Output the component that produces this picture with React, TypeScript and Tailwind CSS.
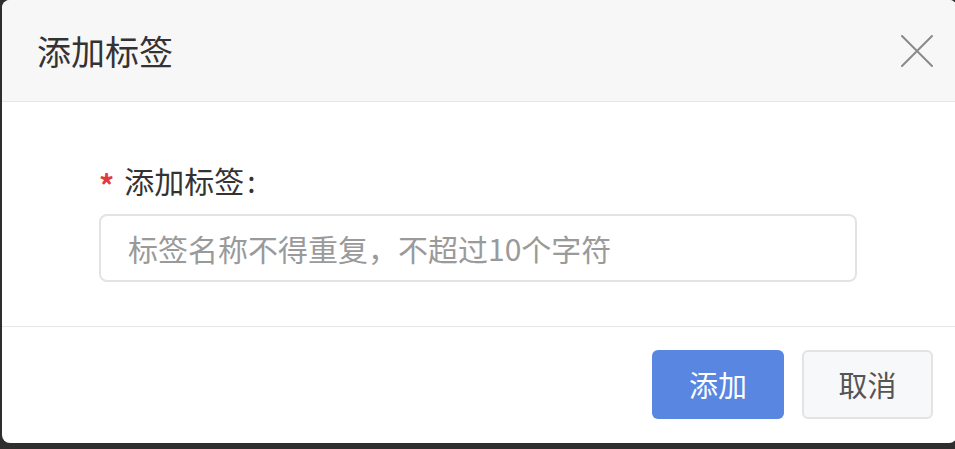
const font = {
  fontFamily: '"Noto Sans CJK SC", "Noto Sans", sans-serif',
};

export default function App() {
  return (
    <div className="h-[449px] w-[955px] overflow-hidden bg-[#2e2e2e]" style={font}>
      <div className="ml-[2px] flex h-[443px] w-[955px] flex-col overflow-hidden rounded-lg bg-white">
        {/* Header */}
        <div className="flex h-[102px] shrink-0 items-center justify-between border-b border-[#e6e6e6] bg-[#f7f7f7] pl-[35px] pr-[24px]">
          <h2 className="text-[34px] leading-none text-[#333]">添加标签</h2>
          <button className="flex h-[32px] w-[32px] items-center justify-center">
            <svg viewBox="0 0 32 32" className="h-[32px] w-[32px]" fill="none" stroke="#8a8a8a" strokeWidth={2} strokeLinecap="round">
              <path d="M1 1L31 31M31 1L1 31" />
            </svg>
          </button>
        </div>

        {/* Body */}
        <div className="border-b border-[#e6e6e6] px-[97px] pb-[44px] pt-[60px]">
          <label className="flex h-[36px] items-center text-[30px] text-[#333]">
            <span className="mr-[10px] mt-[8px] text-[30px] font-bold leading-none text-[#e5383b]">*</span>
            添加标签<span className="ml-[3px]">:</span>
          </label>
          <input
            className="mt-[16px] h-[68px] w-[758px] rounded-lg border-2 border-[#e3e3e3] px-[27px] text-[30px] text-[#333] outline-none placeholder:text-[#9a9a9a]"
            placeholder="标签名称不得重复，不超过10个字符"
          />
        </div>

        {/* Footer */}
        <div className="flex justify-end gap-[18px] pr-[24px] pt-[23px]">
          <button className="h-[69px] w-[132px] rounded-md bg-[#5886e0] text-[29px] text-white">
            添加
          </button>
          <button className="h-[69px] w-[131px] rounded-md border-2 border-[#e3e3e3] bg-[#f7f8fa] text-[29px] text-[#555]">
            取消
          </button>
        </div>
      </div>
    </div>
  );
}
